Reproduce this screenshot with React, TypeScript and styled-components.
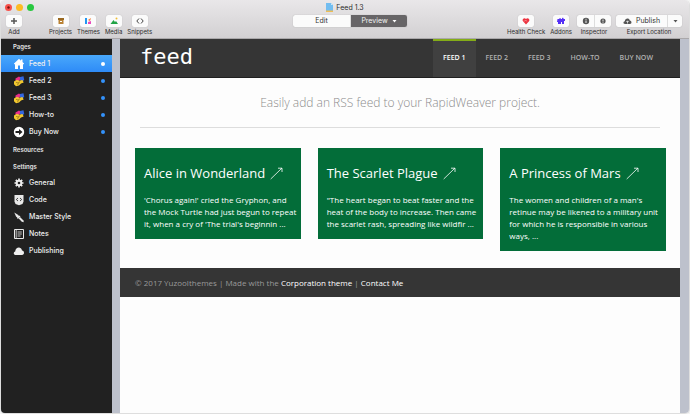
import React from "react";
import styled, { createGlobalStyle } from "styled-components";

const GlobalStyle = createGlobalStyle`
  * { box-sizing: border-box; }
  body { margin: 0; background: #f4f4f4; }
  button { font: inherit; color: inherit; border: 0; padding: 0; background: none; cursor: pointer; }
  a { color: inherit; text-decoration: none; }
  h1, h2, h3, p { margin: 0; font-weight: 400; }
  svg { display: block; flex: none; }
`;

const uiFont = `Inter, "Liberation Sans", sans-serif`;
const siteFont = `"Open Sans", "Noto Sans", sans-serif`;

const Window = styled.div`
  display: flex;
  flex-direction: column;
  min-height: 100vh;
  border: 1px solid #dedede;
  border-top: 0;
  border-radius: 5px;
  overflow: hidden;
  background: #fdfdfd;
  font-family: ${uiFont};
`;

const TitleBar = styled.header`
  background: linear-gradient(#e9e7e9, #d2d0d2);
  border-bottom: 1px solid #aaa8aa;
  color: #2c2c2c;
`;

const TitleRow = styled.div`
  display: grid;
  grid-template-columns: 1fr auto 1fr;
  align-items: center;
  height: 15px;
  padding: 0 4px;
`;

const Lights = styled.div`
  display: flex;
  gap: 4px;
`;

const Light = styled.button<{ $color: string }>`
  display: grid;
  place-items: center;
  width: 7px;
  height: 7px;
  border-radius: 50%;
  background: ${(p) => p.$color};
`;

const WindowTitle = styled.h1`
  display: flex;
  align-items: center;
  gap: 3px;
  font-size: 7px;
  line-height: 10px;
`;

const Toolbar = styled.div`
  display: grid;
  grid-template-columns: 1fr auto 1fr;
  align-items: start;
  height: 23px;
  padding: 0 7px 0 5px;
`;

const Tools = styled.div<{ $end?: boolean }>`
  display: flex;
  gap: 5px;
  justify-content: ${(p) => (p.$end ? "flex-end" : "flex-start")};
`;

const Tool = styled.button<{ $spaced?: boolean }>`
  display: flex;
  flex-direction: column;
  align-items: center;
  gap: 1px;
  min-width: 16px;
  margin-right: ${(p) => (p.$spaced ? 22 : 0)}px;
  font-size: 6px;
  line-height: 8px;
  white-space: nowrap;
`;

const ToolFace = styled.span`
  display: grid;
  place-items: center;
  width: 16px;
  height: 12px;
  border-radius: 2px;
  background: #fbfbfb;
  box-shadow: 0 0 1px #aaa;
`;

const ToolGroup = styled.div`
  display: flex;
  flex-direction: column;
  align-items: center;
  gap: 1px;
  font-size: 6px;
  line-height: 8px;
  white-space: nowrap;
`;

const Segments = styled.div`
  display: flex;
  height: 12px;
  border-radius: 2px;
  overflow: hidden;
  background: #fbfbfb;
  box-shadow: 0 0 1px #999;
`;

const Segment = styled.button<{ $width: number; $active?: boolean }>`
  display: flex;
  align-items: center;
  justify-content: center;
  gap: 4px;
  width: ${(p) => p.$width}px;
  font-size: 7px;
  line-height: 12px;
  color: ${(p) => (p.$active ? "#f5f5f5" : "#333")};
  background: ${(p) => (p.$active ? "#676567" : "transparent")};
  & + & { border-left: 1px solid #ddd; }
`;

const ModeSwitch = styled(Segments)`
  margin-left: 12px;
`;

const Workspace = styled.div`
  flex: 1;
  display: flex;
  background: #bdc1cc;
`;

const Sidebar = styled.nav`
  flex: none;
  width: 111px;
  background: #212121;
  color: #f0f0f0;
`;

const SideHeading = styled.h2<{ $height: number }>`
  display: flex;
  align-items: center;
  height: ${(p) => p.$height}px;
  padding-left: 12px;
  font-size: 6px;
  font-weight: 600;
  line-height: 8px;
  color: #e4e4e4;
`;

const SideItem = styled.button<{ $active?: boolean }>`
  display: grid;
  grid-template-columns: 12px 1fr auto;
  align-items: center;
  gap: 4px;
  width: 100%;
  height: 17px;
  padding: 0 7px 0 12px;
  text-align: left;
  font-size: 7px;
  font-weight: 500;
  line-height: 10px;
  background: ${(p) => (p.$active ? "linear-gradient(#49a8fb, #2e8bf7)" : "none")};
`;

const Dot = styled.span<{ $active?: boolean }>`
  width: 4px;
  height: 4px;
  border-radius: 50%;
  background: ${(p) => (p.$active ? "#fff" : "#3392fb")};
`;

const Site = styled.main`
  flex: 1;
  min-width: 0;
  margin: 0 9px 0 8px;
  background: #fdfdfd;
  font-family: ${siteFont};
`;

const SiteHeader = styled.header`
  display: flex;
  justify-content: space-between;
  height: 39px;
  padding: 0 17px 0 20px;
  background: #353535;
  border-bottom: 1px solid #202020;
`;

const SiteName = styled.a`
  font-family: "DejaVu Sans Mono", monospace;
  font-size: 22px;
  line-height: 36px;
  color: #fff;
`;

const SiteNav = styled.nav`
  display: flex;
`;

const SiteLink = styled.a<{ $active?: boolean }>`
  padding: 0 10px;
  border-top: 2px solid ${(p) => (p.$active ? "#84ac18" : "transparent")};
  background: ${(p) => (p.$active ? "#404040" : "none")};
  color: ${(p) => (p.$active ? "#fff" : "#b0b0b0")};
  font-size: 7px;
  font-weight: 600;
  line-height: 34px;
  white-space: nowrap;
`;

const Tagline = styled.p`
  margin: 0 20px;
  padding: 15px 0;
  border-bottom: 1px solid #ddd;
  color: #8c8c8c;
  font-size: 12px;
  font-weight: 300;
  line-height: 19px;
  text-align: center;
`;

const Cards = styled.section`
  display: grid;
  grid-template-columns: repeat(3, 1fr);
  align-items: start;
  gap: 17px;
  padding: 20px 14px 17px 15px;
`;

const Card = styled.article`
  padding: 15px 2px 9px 9px;
  background: #036d39;
  color: #fff;
`;

const CardTitle = styled.h3`
  font-size: 13px;
  line-height: 21px;
  white-space: nowrap;
  a { display: flex; align-items: center; gap: 5px; }
`;

const CardText = styled.p`
  margin-top: 10px;
  font-size: 8px;
  line-height: 12px;
`;

const SiteFooter = styled.footer`
  padding: 8px 15px;
  background: #353535;
  color: #999;
  font-size: 8px;
  line-height: 13px;
  a { color: #fff; }
`;

const Caret = ({ color }: { color: string }) => (
  <svg width="5" height="3" viewBox="0 0 5 3"><path d="M.5 0h4L2.500 2.500z" fill={color} /></svg>
);

const DocIcon = () => (
  <svg width="7" height="9" viewBox="0 0 7 9">
    <path d="M0 0h5l2 2v7H0z" fill="#72bdf0" /><path d="M5 0v2h2z" fill="#c9e6fa" />
    <path d="M0 7.500h7V9H0z" fill="#f0bd55" />
  </svg>
);

const toolIcons: Record<string, React.ReactNode> = {
  Add: <path d="M5 2v6M2 5h6" stroke="#555" strokeWidth="1.500" />,
  Projects: <><path d="M2 2h6v2H2z" fill="#9a6820" /><path d="M2.500 4h5v4h-5z" fill="#b98235" /><path d="M4 5h2v1H4z" fill="#fff" /></>,
  Themes: <><path d="M2 2h2v6H2z" fill="#2196f3" /><path d="M5 4l3-2-1 3z" fill="#f57c35" /><path d="M5 8V6l3-1v3z" fill="#e84abd" /></>,
  Media: <><path d="M1.500 8l3-4 1.500 2L7 5l2 3z" fill="#21a447" /><circle cx="7.500" cy="2.500" r="1" fill="#efbc35" /></>,
  Snippets: <path d="M4 2.500L1.800 5 4 7.500M6 2.500L8.200 5 6 7.500" fill="none" stroke="#444" strokeWidth="1" />,
  "Health Check": <><path d="M5 8.500L1.800 5C.8 3 3.500 1 5 3c1.500-2 4.200 0 3.200 2z" fill="#ed3340" /><path d="M2.500 5h1.500l1-1 .8 1.500" fill="none" stroke="#f9b2b2" strokeWidth=".5" /></>,
  Addons: <path d="M1.500 3h2c-.6-1.500 1.600-1.500 1.200 0H6c0-2 2-1 1.500 0H9v2H8v3H6V6H5v2H2V6H1z" fill="#5530f5" />,
};

const ToolIcon = ({ name }: { name: string }) => (
  <svg width="10" height="10" viewBox="0 0 10 10">{toolIcons[name]}</svg>
);

const InfoIcon = ({ small }: { small?: boolean }) => (
  <svg width="8" height="8" viewBox="0 0 8 8">
    <circle cx="4" cy="4" r={small ? 2.6 : 3.2} fill="#555" />
    <path d={small ? "M4 2.500v2M4 5v.7" : "M4 1.800v1M4 3.500V6"} stroke="#fff" strokeWidth=".9" />
  </svg>
);

const UploadIcon = () => (
  <svg width="9" height="8" viewBox="0 0 9 8">
    <path d="M2 7C0 7 0 4.500 1.800 4.300 2 1 6 .5 6.800 3.500 9 4 9 7 7 7z" fill="#555" />
    <path d="M4.500 6.500V4M3.300 5l1.200-1.200L5.700 5" fill="none" stroke="#fff" strokeWidth=".7" />
  </svg>
);

const sideIcons: Record<string, React.ReactNode> = {
  home: <path d="M6 .8L.8 5.800 2 6.500V11h3V7.500h2V11h3V6.500l1.200-.7L9.500 4V1.500H8V2.700z" fill="#fff" />,
  feed: (
    <>
      <path d="M2.500 3.500L6 1.500l2 1.500-2 3-3.500 0z" fill="#e72d8d" />
      <path d="M7 2l3.500-.8.7 3.500L9.500 6.500 7 5z" fill="#3467e0" />
      <path d="M1 6.500L4 4.700l2 1.100 3.500-.8 1.200 2.500-2.700 1-2 2-3 .7-2-2z" fill="#f2c82e" />
      <path d="M3 7.300l2 .7 2-1.300M4 9.500l2-1" fill="none" stroke="#8a6d1c" strokeWidth=".7" />
    </>
  ),
  arrow: <><circle cx="6" cy="6" r="5.200" fill="#fff" /><path d="M2.500 5H6V3l3.500 3L6 9V7H2.500z" fill="#222" /></>,
  gear: (
    <>
      <path d="M6 1.500v9M1.500 6h9M2.800 2.800l6.400 6.400M9.200 2.800L2.800 9.200" stroke="#eee" strokeWidth="1.700" />
      <circle cx="6" cy="6" r="3.300" fill="#eee" /><circle cx="6" cy="6" r="1.300" fill="#212121" />
    </>
  ),
  code: <><path d="M1.500 1h9v6.500L9.500 10 6 11.200 2.500 10l-1-2.500z" fill="#e8e8e8" /><path d="M5 4L3.300 5.500 5 7M7 4l1.700 1.500L7 7" fill="none" stroke="#333" strokeWidth=".9" /></>,
  brush: <><path d="M1.300 1.500l4 2.500 1.200 2L5 7.200 3 5.500z" fill="#e8e8e8" /><path d="M7 6l3.500 3.500.3 1.700-2-.5L5.700 7.500z" fill="#e8e8e8" /><path d="M4.500 7.500L7 5" stroke="#e8e8e8" strokeWidth="1.300" /></>,
  notes: <><path d="M1.500 1.500h9v9h-9z" fill="none" stroke="#e8e8e8" strokeWidth="1" /><path d="M3.200 2v8M4.500 4h4.300M4.500 6h4.300M4.500 8h3" stroke="#d4d4d4" strokeWidth=".9" /></>,
  cloud: <path d="M2.500 10C.3 10 .3 7 2.200 6.500 2.500 2 8 1 9 5.500c2.700.3 2.700 4.500 0 4.500z" fill="#eee" />,
};

const SideIcon = ({ name }: { name: string }) => (
  <svg width="12" height="12" viewBox="0 0 12 12">{sideIcons[name]}</svg>
);

const ArrowIcon = () => (
  <svg width="13" height="13" viewBox="0 0 13 13">
    <path d="M.7 12L12 1M8 1.200h4V5" fill="none" stroke="#fff" strokeWidth=".8" />
  </svg>
);

const pages = [
  ["Feed 1", "home"],
  ["Feed 2", "feed"],
  ["Feed 3", "feed"],
  ["How-to", "feed"],
  ["Buy Now", "arrow"],
];

const settings = [
  ["General", "gear"],
  ["Code", "code"],
  ["Master Style", "brush"],
  ["Notes", "notes"],
  ["Publishing", "cloud"],
];

const stories = [
  ["Alice in Wonderland", "'Chorus again!' cried the Gryphon, and the Mock Turtle had just begun to repeat it, when a cry of 'The trial's beginnin ..."],
  ["The Scarlet Plague", "\"The heart began to beat faster and the heat of the body to increase. Then came the scarlet rash, spreading like wildfir ..."],
  ["A Princess of Mars", "The women and children of a man's retinue may be likened to a military unit for which he is responsible in various ways, ..."],
];

const ToolButton = ({ name, spaced }: { name: string; spaced?: boolean }) => (
  <Tool $spaced={spaced}>
    <ToolFace><ToolIcon name={name} /></ToolFace>
    {name}
  </Tool>
);

export default function App() {
  return (
    <>
      <GlobalStyle />
      <Window>
        <TitleBar>
          <TitleRow>
            <Lights>
              <Light $color="#f9504a" aria-label="Close">
                <svg width="3" height="3" viewBox="0 0 3 3"><circle cx="1.500" cy="1.500" r="1.200" fill="#74130f" /></svg>
              </Light>
              <Light $color="#fdbb24" aria-label="Minimize" />
              <Light $color="#28c840" aria-label="Zoom" />
            </Lights>
            <WindowTitle><DocIcon />Feed 1.3</WindowTitle>
          </TitleRow>
          <Toolbar>
            <Tools>
              <ToolButton name="Add" spaced />
              {["Projects", "Themes", "Media", "Snippets"].map((n) => <ToolButton key={n} name={n} />)}
            </Tools>
            <ModeSwitch>
              <Segment $width={57}>Edit</Segment>
              <Segment $width={57} $active>Preview <Caret color="#fff" /></Segment>
            </ModeSwitch>
            <Tools $end>
              <ToolButton name="Health Check" />
              <ToolButton name="Addons" />
              <ToolGroup role="group" aria-label="Inspector">
                <Segments>
                  <Segment $width={17} aria-label="Page info"><InfoIcon /></Segment>
                  <Segment $width={17} aria-label="Item info"><InfoIcon small /></Segment>
                </Segments>
                Inspector
              </ToolGroup>
              <ToolGroup role="group" aria-label="Export Location">
                <Segments>
                  <Segment $width={51}><UploadIcon />Publish</Segment>
                  <Segment $width={15} aria-label="Export options"><Caret color="#555" /></Segment>
                </Segments>
                Export Location
              </ToolGroup>
            </Tools>
          </Toolbar>
        </TitleBar>
        <Workspace>
          <Sidebar>
            <SideHeading $height={16}>Pages</SideHeading>
            {pages.map(([label, icon], i) => (
              <SideItem key={label} $active={i === 0}>
                <SideIcon name={icon} />{label}<Dot $active={i === 0} />
              </SideItem>
            ))}
            <SideHeading $height={19}>Resources</SideHeading>
            <SideHeading $height={15}>Settings</SideHeading>
            {settings.map(([label, icon]) => (
              <SideItem key={label}><SideIcon name={icon} />{label}</SideItem>
            ))}
          </Sidebar>
          <Site>
            <SiteHeader>
              <SiteName href="#">feed</SiteName>
              <SiteNav>
                {pages.map(([label], i) => (
                  <SiteLink key={label} href="#" $active={i === 0}>{label.toUpperCase()}</SiteLink>
                ))}
              </SiteNav>
            </SiteHeader>
            <Tagline>Easily add an RSS feed to your RapidWeaver project.</Tagline>
            <Cards>
              {stories.map(([title, text]) => (
                <Card key={title}>
                  <CardTitle><a href="#">{title}<ArrowIcon /></a></CardTitle>
                  <CardText>{text}</CardText>
                </Card>
              ))}
            </Cards>
            <SiteFooter>
              © 2017 Yuzoolthemes | Made with the <a href="#">Corporation theme</a> | <a href="#">Contact Me</a>
            </SiteFooter>
          </Site>
        </Workspace>
      </Window>
    </>
  );
}
